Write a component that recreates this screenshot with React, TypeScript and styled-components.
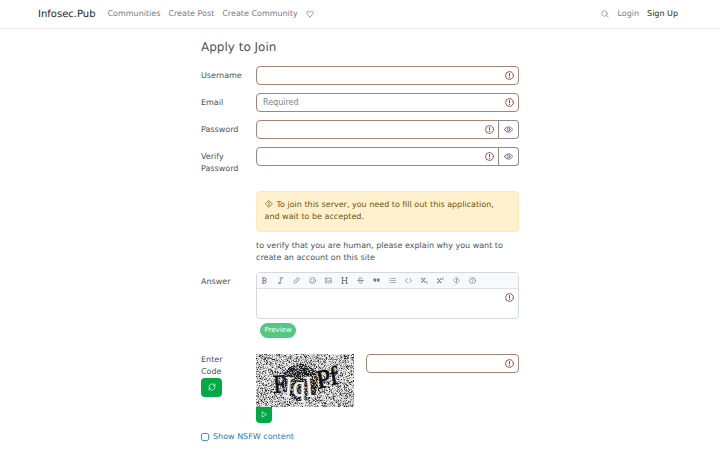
import React from "react";
import styled, { createGlobalStyle } from "styled-components";

const Global = createGlobalStyle`
  *, *::before, *::after { box-sizing: border-box; }
  html, body { margin: 0; background: #fff; }
  body {
    height: 450px; overflow: hidden; color: #4e5358;
    font: 8px/12px "DejaVu Sans", sans-serif;
    text-rendering: geometricPrecision;
  }
  button, input, textarea { font: inherit; }
`;

const Nav = styled.nav`
  height: 29px; padding: 0 42px 0 38px; display: flex; align-items: center;
  border-bottom: 1px solid #ececec; color: #797b7f;
`;
const Brand = styled.a`font-size: 10px; color: #222529; margin-right: 12px; padding-top: 1px;`;
const Links = styled.div`display: flex; align-items: center; gap: 8px;`;
const NavLink = styled.a<{ $dark?: boolean }>`color: ${p => (p.$dark ? "#25282c" : "#797b7f")};`;
const Spacer = styled.div`flex: 1;`;

const Svg = styled.svg<{ $size: number }>`
  display: block; flex: none; width: ${p => p.$size}px; height: ${p => p.$size}px;
  fill: none; stroke: currentColor; stroke-width: 2; stroke-linecap: round; stroke-linejoin: round;
`;

const icons = {
  heart: <path d="M12 21C9 16.5 2 14 2 8.5C2 3 9.5 2 12 7.5C14.5 2 22 3 22 8.5C22 14 15 16.5 12 21z" />,
  search: <><circle cx="10.5" cy="10.5" r="8.3" /><path d="m16.5 16.5 5.2 5.2" /></>,
  alert: <><circle cx="12" cy="12" r="10.5" strokeWidth="2.3" /><path d="M12 6.5v6.3M12 16.8v.4" strokeWidth="2.8" /></>,
  eye: <><path d="M1 12C6 2.5 18 2.5 23 12C18 21.5 6 21.5 1 12z" /><circle cx="12" cy="12" r="4" /></>,
  diamond: <><path d="M12 1.8 22.2 12 12 22.2 1.8 12z" /><path d="M12 7v5.6M12 16v.7" strokeWidth="2.6" /></>,
  bold: <path d="M5 3h8a4.3 4.3 0 0 1 0 9H7M13 12a4.5 4.5 0 0 1 0 9H5M7 3v18" strokeWidth="2.8" />,
  italic: <path d="M10 3h10M4 21h10M15 3 9 21" strokeWidth="2.6" />,
  link: <path d="M9 14a4.5 4.5 0 0 0 7 .6l4.2-4.2a4.6 4.6 0 0 0-6.5-6.6L11.5 6M15 10a4.5 4.5 0 0 0-7-.6l-4.2 4.2a4.6 4.6 0 0 0 6.5 6.6l2.1-2.2" />,
  smile: <><circle cx="12" cy="12" r="10.5" /><path d="M7 14c2 4.5 8 4.5 10 0M8.5 8.5v.7M15.5 8.5v.7" /></>,
  image: <><rect x="2" y="4" width="20" height="16" rx="1" /><path d="m3 17 5-5 4 4 4-6 5 6M7 8h.2" /></>,
  header: <path d="M5 2.5v19M19 2.5v19M5 12h14M2 2.5h6M16 2.5h6M2 21.5h6M16 21.5h6" strokeWidth="3" />,
  strike: <path d="M18 7c0-6-12-6-12-.5 0 2.5 3 4 6 5 4 1 6 2.5 6 5 0 6-12 6-12.5 0M2 12h20" strokeWidth="2.4" />,
  quote: <path d="M2 6h8v6c0 3-2 5-5 5l2-4H2zM14 6h8v6c0 3-2 5-5 5l2-4h-5z" fill="currentColor" strokeWidth="1" />,
  list: <path d="M8 5h14M8 12h14M8 19h14M2 5h1M2 12h1M2 19h1" />,
  code: <path d="m8 5-7 7 7 7M16 5l7 7-7 7" strokeWidth="2.4" />,
  sub: <><path d="m3 5 10 12M13 5 3 17M2 5h3M11 5h3M2 17h3M11 17h3" strokeWidth="2.8" /><path d="M18 16c4-3 5 1 2 3l-2 3h4" strokeWidth="1.6" /></>,
  sup: <><path d="m3 7 10 12M13 7 3 19M2 7h3M11 7h3M2 19h3M11 19h3" strokeWidth="2.8" /><path d="M18 3c4-3 5 1 2 3l-2 3h4" strokeWidth="1.6" /></>,
  help: <><circle cx="12" cy="12" r="10.5" /><path d="M8.5 9c0-4.5 7-4.3 7-.3 0 2.6-3.5 2.7-3.5 5.3M12 17.3v.2" /></>,
  refresh: <path d="M3 11a9 9 0 0 1 16-5l2 3M21 3v6h-5M21 13a9 9 0 0 1-16 5l-2-3M3 21v-6h5" />,
  play: <path d="M5 3.5 20 12 5 20.5z" />,
};
type IconName = keyof typeof icons;
const Icon = ({ name, size = 8 }: { name: IconName; size?: number }) => (
  <Svg viewBox="0 0 24 24" $size={size} aria-hidden="true">{icons[name]}</Svg>
);

const Form = styled.form`width: 318px; margin-left: 201px; padding-top: 11px;`;
const Title = styled.h1`margin: 0 0 12px; font-size: 12px; line-height: 14.4px; font-weight: 400;`;
const Row = styled.div<{ $gap?: number }>`
  display: grid; grid-template-columns: 55px 263px; margin-bottom: ${p => p.$gap ?? 8}px;
`;
const Label = styled.label`padding-top: 4px;`;
const Group = styled.div`display: flex; height: 19px;`;
const Field = styled.div<{ $joined?: boolean }>`
  flex: 1; min-width: 0; display: flex; align-items: center; padding: 0 4px 0 6px;
  border: 1px solid #a78576; border-radius: ${p => (p.$joined ? "4px 0 0 4px" : "4px")};
  color: #85452f;
`;
const Input = styled.input`
  flex: 1; min-width: 0; padding: 0; border: 0; outline: 0; background: none; color: #4e5358;
  &::placeholder { color: #808286; opacity: 1; }
`;
const EyeButton = styled.button`
  width: 21px; padding: 0; margin-left: -1px; display: grid; place-items: center; color: #4d5055;
  background: none; border: 1px solid #8e8b8c; border-left-color: #a78576; border-radius: 0 4px 4px 0;
`;
const Content = styled.div`margin-left: 55px;`;
const Alert = styled.div`
  height: 41px; padding: 7.5px 7.5px; margin: 15.5px 0 8px; color: #6c5511;
  background: #fff1cd; border: 1px solid #ffe9b3; border-radius: 4px;
  svg { display: inline-block; vertical-align: -1px; margin-right: 4px; }
`;
const Question = styled.p`margin: 0 0 8px;`;
const Editor = styled.div`height: 47px; border: 1px solid #d4d9de; border-radius: 4px; overflow: hidden;`;
const Toolbar = styled.div`
  height: 16px; display: flex; background: #f8f9fa; border-bottom: 1px solid #dde1e5; color: #6d7074;
`;
const Tool = styled.button`
  width: 16px; height: 15px; padding: 0 1px 0 0; display: grid; place-items: center;
  border: 0; background: none; color: inherit;
`;
const Answer = styled.div`display: flex; justify-content: flex-end; padding: 4px 4px; color: #85452f;`;
const Preview = styled.button`
  width: 36px; height: 15px; margin: 4px 0 0 4px; padding: 0; display: block; font-size: 7px; line-height: 13px;
  color: #fff; background: #54c784; border: 0; border-radius: 8px;
`;
const CodeRow = styled.div`display: grid; grid-template-columns: 55px 98px 165px; margin-top: 16px;`;
const GreenButton = styled.button<{ $small?: boolean }>`
  width: ${p => (p.$small ? 16 : 21)}px; height: ${p => (p.$small ? 16 : 19)}px; padding: 0;
  display: grid; place-items: center; color: #fff; background: #00a846; border: 0;
  border-radius: ${p => (p.$small ? "0 0 4px 4px" : "4px")};
`;
const CodeLabel = styled.div`width: 40px;`;
const CodeField = styled(Group)`margin-left: 12px;`;
const CaptchaSvg = styled.svg`display: block; width: 98px; height: 53px;`;
const Check = styled.label`display: flex; align-items: center; gap: 4px; margin-top: 8px; color: #1b7fc0;`;
const Box = styled.input`
  appearance: none; width: 8px; height: 8px; margin: 0; border: 1px solid #4c98cb; border-radius: 2px;
`;

const WIDTH = 98;
const HEIGHT = 53;
const shades = ["#202020", "#505050", "#787878", "#989898", "#b4b4b4", "#cccccc", "#e0e0e0", "#f4f4f4"];

const makeNoise = () => {
  let seed = 7193;
  const next = () => {
    seed = (seed * 48271) % 2147483647;
    return seed / 2147483647;
  };
  const paths = shades.map(() => "");
  for (let y = 0; y < HEIGHT; y++) {
    for (let x = 0; x < WIDTH; x++) {
      const inBall = ((x - 43.5) / 18.5) ** 2 + ((y - 28) / 18.5) ** 2 < 1;
      const r = next();
      const level = inBall ? Math.floor(r ** 2.6 * 6) : Math.floor(r ** 0.65 * 8);
      paths[level] += `M${x} ${y}h1v1h-1z`;
    }
  }
  return paths;
};
const noise = makeNoise();

const Captcha = () => (
  <CaptchaSvg viewBox={`0 0 ${WIDTH} ${HEIGHT}`} role="img" aria-label="captcha">
    {noise.map((d, i) => <path key={i} d={d} fill={shades[i]} shapeRendering="crispEdges" />)}
    <g fontFamily="Liberation Serif, serif" fontSize="26" strokeWidth=".6">
      <text fill="#0c0c0c" stroke="#0c0c0c" transform="translate(18 39) rotate(-4) scale(.85 1)">F</text>
      <g fill="#f2f2f2" stroke="#f2f2f2">
        <text transform="translate(28 43) rotate(4) scale(.9 1.15)">I</text>
        <text transform="translate(37 42) scale(.95 1.1)">q</text>
        <text transform="translate(50 43) rotate(-5) scale(.9 1.15)">I</text>
      </g>
      <text fill="#0c0c0c" stroke="#0c0c0c" transform="translate(62 35) rotate(-14) skewX(-4)">P</text>
      <text fill="#0c0c0c" stroke="#0c0c0c" transform="translate(75 31) rotate(-10)">f</text>
    </g>
  </CaptchaSvg>
);

const tools: IconName[] = ["bold", "italic", "link", "smile", "image", "header", "strike", "quote", "list", "code", "sub", "sup", "diamond", "help"];

const TextRow = ({ label, placeholder }: { label: string; placeholder?: string }) => (
  <Row><Label>{label}</Label><Group><Field><Input placeholder={placeholder} /><Icon name="alert" size={9} /></Field></Group></Row>
);
const PasswordRow = ({ label }: { label: string }) => (
  <Row><Label>{label}</Label><Group><Field $joined><Input type="password" /><Icon name="alert" size={9} /></Field><EyeButton type="button"><Icon name="eye" size={9} /></EyeButton></Group></Row>
);

export default function App() {
  return (
    <>
      <Global />
      <Nav>
        <Brand>Infosec.Pub</Brand>
        <Links><NavLink>Communities</NavLink><NavLink>Create Post</NavLink><NavLink>Create Community</NavLink><Icon name="heart" /></Links>
        <Spacer />
        <Links><Icon name="search" /><NavLink>Login</NavLink><NavLink $dark>Sign Up</NavLink></Links>
      </Nav>
      <Form>
        <Title>Apply to Join</Title>
        <TextRow label="Username" />
        <TextRow label="Email" placeholder="Required" />
        <PasswordRow label="Password" />
        <PasswordRow label="Verify Password" />
        <Content>
          <Alert><Icon name="diamond" />To join this server, you need to fill out this application, and wait to be accepted.</Alert>
          <Question>to verify that you are human, please explain why you want to create an account on this site</Question>
        </Content>
        <Row $gap={0}>
          <Label>Answer</Label>
          <div>
            <Editor>
              <Toolbar>{tools.map(t => <Tool key={t} type="button"><Icon name={t} size={7} /></Tool>)}</Toolbar>
              <Answer><Icon name="alert" size={9} /></Answer>
            </Editor>
            <Preview type="button">Preview</Preview>
          </div>
        </Row>
        <CodeRow>
          <CodeLabel>Enter Code<GreenButton type="button"><Icon name="refresh" /></GreenButton></CodeLabel>
          <div><Captcha /><GreenButton type="button" $small><Icon name="play" size={7} /></GreenButton></div>
          <CodeField><Field><Input /><Icon name="alert" size={9} /></Field></CodeField>
        </CodeRow>
        <Check><Box type="checkbox" />Show NSFW content</Check>
      </Form>
    </>
  );
}
